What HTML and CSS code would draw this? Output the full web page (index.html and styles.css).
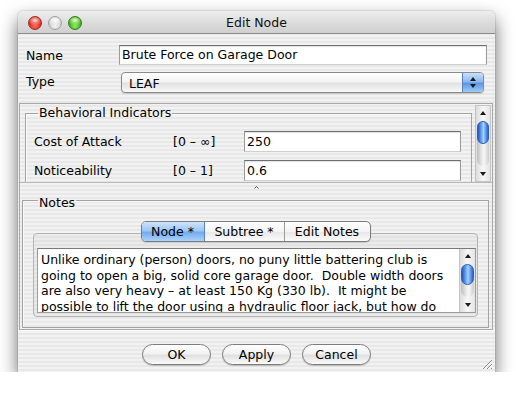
FILE: index.html
```html
<!DOCTYPE html>
<html>
<head>
<meta charset="utf-8">
<link rel="stylesheet" href="styles.css">
</head>
<body>
<div class="window">
  <div class="titlebar">
    <div class="lights">
      <span class="light red"></span><span class="light gray"></span><span class="light green"></span>
    </div>
    <div class="title">Edit Node</div>
    <div></div>
  </div>
  <div class="content">
    <div class="row name-row">
      <span class="lbl">Name</span>
      <div class="field name-field">Brute Force on Garage Door</div>
    </div>
    <div class="row type-row">
      <span class="lbl type-lbl">Type</span>
      <div class="popup">
        <span class="popup-text">LEAF</span>
        <span class="stepper"><i class="tri up"></i><i class="tri down"></i></span>
      </div>
    </div>
    <div class="split">
      <div class="top-pane">
        <div class="viewport">
          <fieldset class="group bi">
            <legend>Behavioral Indicators</legend>
            <div class="bi-row">
              <span class="bi-label">Cost of Attack</span>
              <span class="bi-range">[0 – ∞]</span>
              <div class="field bi-field">250</div>
            </div>
            <div class="bi-row">
              <span class="bi-label">Noticeability</span>
              <span class="bi-range">[0 – 1]</span>
              <div class="field bi-field">0.6</div>
            </div>
          </fieldset>
        </div>
        <div class="vscroll big">
          <div class="arrow"><i class="tri up"></i></div>
          <div class="track"><div class="thumb"></div></div>
          <div class="arrow"><i class="tri down"></i></div>
        </div>
      </div>
      <div class="divider">
        <svg width="5" height="3" viewBox="0 0 5 3"><path d="M0.5 2.5 L2.5 0.5 L4.5 2.5" fill="none" stroke="#555" stroke-width="1"/></svg>
      </div>
      <div class="bottom-pane">
        <fieldset class="group notes">
          <legend>Notes</legend>
          <div class="segmented">
            <span class="seg sel">Node *</span><span class="seg">Subtree *</span><span class="seg last">Edit Notes</span>
          </div>
          <div class="tabbox">
            <div class="textarea">
              <div class="text">Unlike ordinary (person) doors, no puny little battering club is
going to open a big, solid core garage door.  Double width doors
are also very heavy – at least 150 Kg (330 lb).  It might be
possible to lift the door using a hydraulic floor jack, but how do</div>
              <div class="vscroll small">
                <div class="arrow"><i class="tri up"></i></div>
                <div class="track"><div class="thumb"></div></div>
                <div class="arrow"><i class="tri down"></i></div>
              </div>
            </div>
          </div>
        </fieldset>
      </div>
    </div>
    <div class="buttons">
      <span class="btn">OK</span><span class="btn">Apply</span><span class="btn">Cancel</span>
      <svg class="grip" width="11" height="11" viewBox="0 0 11 11">
        <path d="M1 10 L10 1 M5 10 L10 5 M9 10 L10 9" stroke="#8a8a8a" stroke-width="1"/>
        <path d="M2 10 L10 2 M6 10 L10 6" stroke="#fff" stroke-width="1"/>
      </svg>
    </div>
  </div>
</div>
</body>
</html>
```

FILE: styles.css
```css
* { box-sizing: border-box; }
html, body { margin: 0; padding: 0; background: #fff; }
body {
  font-family: "DejaVu Sans", "Liberation Sans", sans-serif;
  font-size: 12.5px;
  color: #000;
}
.window {
  margin: 11px 0 0 18px;
  width: 477px;
  height: 361px;
  border-radius: 5px 5px 0 0;
  box-shadow: 0 8px 18px rgba(0,0,0,0.6), 0 0 1px rgba(0,0,0,0.7);
  display: flex;
  flex-direction: column;
  overflow: hidden;
  background: repeating-linear-gradient(to bottom, #f2f2f2 0 2px, #e8e8e8 2px 4px);
}
.titlebar {
  height: 23px;
  flex: none;
  display: grid;
  grid-template-columns: 1fr auto 1fr;
  align-items: center;
  background: linear-gradient(to bottom, #eeeeee, #dadada 60%, #d0d0d0);
  border-bottom: 1px solid #8e8e8e;
}
.lights { display: flex; gap: 6px; padding-left: 10px; padding-top: 1px; }
.light {
  width: 14px; height: 14px; border-radius: 50%;
  border: 1px solid rgba(0,0,0,0.35);
}
.red { background: radial-gradient(ellipse 60% 45% at 50% 28%, #ffe6e3 0, #f58a82 40%, transparent 100%), radial-gradient(circle at 50% 75%, #ff6a5c 0, #d8271b 55%, #b0130b 100%); border-color: #9e2a23; }
.gray { background: radial-gradient(ellipse 60% 45% at 50% 28%, #ffffff 0, #f0f0f0 40%, transparent 100%), radial-gradient(circle at 50% 75%, #f4f4f4 0, #cfcfcf 55%, #b4b4b4 100%); border-color: #a0a0a0; }
.green { background: radial-gradient(ellipse 60% 45% at 50% 28%, #ecffe0 0, #9be27a 40%, transparent 100%), radial-gradient(circle at 50% 75%, #8ef05a 0, #3faa1a 55%, #2a7f0e 100%); border-color: #2f7d1c; }
.title { font-size: 12.5px; color: #111; padding-top: 1px; }

.content { flex: 1; display: flex; flex-direction: column; }
.row { display: flex; align-items: center; padding: 0 8px; }
.name-row { margin-top: 11px; }
.type-row { margin-top: 7px; }
.lbl { width: 93px; flex: none; }
.type-lbl { padding-bottom: 3px; }
.field {
  background: #fff;
  border: 1px solid #9a9a9a;
  border-top-color: #6e6e6e;
  border-bottom-color: #cfcfcf;
  box-shadow: inset 0 1px 1px rgba(0,0,0,0.12);
  height: 21px;
  line-height: 19px;
  padding-left: 2px;
  white-space: nowrap;
  overflow: hidden;
}
.name-field { width: 368px; height: 20px; line-height: 18px; }
.popup {
  margin-left: 2px;
  width: 363px;
  height: 21px;
  border: 1px solid #8a8a8a;
  border-radius: 4px;
  background: linear-gradient(to bottom, #ffffff, #f3f3f3 45%, #e2e2e2 55%, #f8f8f8);
  display: flex;
  align-items: center;
  overflow: hidden;
  box-shadow: 0 1px 1px rgba(0,0,0,0.15);
}
.popup-text { flex: 1; padding-left: 7px; padding-top: 1px; }
.stepper {
  width: 21px; height: 100%;
  border-left: 1px solid #5a7fbf;
  background: linear-gradient(to bottom, #c9e0fb 0, #8cb9f0 45%, #5f97e4 55%, #9ccaf8 100%);
  display: flex; flex-direction: column; align-items: center; justify-content: center; gap: 3px;
}
.tri { display: block; width: 0; height: 0; border-left: 3px solid transparent; border-right: 3px solid transparent; }
.tri.up { border-bottom: 4px solid #1a1a1a; }
.tri.down { border-top: 4px solid #1a1a1a; }

.split {
  margin: 10px 2px 0 1px;
  height: 227px;
  border: 1px solid #a8a8a8;
  display: flex;
  flex-direction: column;
}
.top-pane {
  height: 79px;
  flex: none;
  display: flex;
  border-bottom: 1px solid #b8b8b8;
  overflow: hidden;
}
.viewport { flex: 1; overflow: hidden; padding: 2px 3px 0 5px; }
.group {
  margin: 0;
  border: 1px solid #a3a3a3;
  box-shadow: inset 1px 1px 0 #fafafa;
}
.group legend {
  padding: 0 1px;
  margin-left: 4px;
  line-height: 14px;
}
.bi { padding: 11px 10px 6px 8px; }
.bi-row { display: flex; align-items: center; height: 21px; margin-bottom: 8px; }
.bi-label { width: 139px; flex: none; }
.bi-range { width: 71px; flex: none; }
.bi-field { flex: 1; }

.vscroll {
  width: 16px;
  flex: none;
  display: flex;
  flex-direction: column;
  background: linear-gradient(to right, #dcdcdc, #f7f7f7 50%, #e4e4e4);
  border-left: 1px solid #c4c4c4;
}
.vscroll.big { margin: 1px 1px 0 0; border: 1px solid #c4c4c4; }
.vscroll .arrow { height: 14px; display: flex; align-items: center; justify-content: center; flex: none; }
.vscroll .track {
  flex: 1;
  margin: 1px 1px;
  border-radius: 7px;
  background: linear-gradient(to right, #bdbdbd, #eeeeee 45%, #f6f6f6 60%, #cdcdcd);
  display: flex; flex-direction: column;
}
.vscroll .thumb {
  height: 23px;
  border-radius: 7px;
  border: 1px solid #2c5fb8;
  background: linear-gradient(to right, #1f55c4 0, #5d9bec 30%, #a7d0fb 55%, #4a8ae6 85%, #2a66cf 100%);
}
.vscroll.small .thumb { height: 21px; }

.divider { height: 10px; flex: none; display: flex; justify-content: center; align-items: flex-start; padding-top: 3px; }
.divider svg { display: block; }
.bottom-pane { flex: 1; padding: 0 3px 0 2px; overflow: hidden; }
.notes { padding: 13px 10px 10px 10px; display: flex; flex-direction: column; }
.notes legend { line-height: 10px; padding-top: 5px; margin-left: 5px; }
.segmented {
  align-self: center;
  display: flex;
  height: 21px;
  border: 1px solid #7c7c7c;
  border-radius: 5px;
  overflow: hidden;
  margin-bottom: -9px;
  position: relative;
  z-index: 1;
  background: linear-gradient(to bottom, #ffffff, #f4f4f4 50%, #e8e8e8 55%, #fbfbfb);
  box-shadow: 0 1px 1px rgba(0,0,0,0.15);
}
.seg { display: flex; align-items: center; justify-content: center; border-right: 1px solid #9a9a9a; }
.seg:nth-child(1) { width: 63px; }
.seg:nth-child(2) { width: 80px; }
.seg:nth-child(3) { width: 85px; border-right: 0; }
.seg.sel { background: linear-gradient(to bottom, #cfe4fb 0, #9dc7f4 45%, #74acef 55%, #a9d3fb 100%); border-right-color: #5b84c2; }
.tabbox {
  border: 1px solid #b3b3b3;
  border-radius: 4px;
  background: repeating-linear-gradient(to bottom, #ebebeb 0 2px, #e2e2e2 2px 4px);
  padding: 14px 1px 3px 3px;
}
.textarea {
  height: 65px;
  display: flex;
  background: #fff;
  border: 1px solid #9c9c9c;
  border-top-color: #7a7a7a;
  overflow: hidden;
}
.text {
  flex: 1;
  white-space: pre;
  line-height: 15.5px;
  padding: 3px 0 0 3px;
  overflow: hidden;
}
.vscroll.small { width: 16px; }

.buttons {
  flex: 1;
  display: flex;
  justify-content: center;
  align-items: flex-start;
  gap: 11px;
  padding-top: 13px;
  position: relative;
  border-top: 1px solid #fbfbfb;
}
.btn {
  width: 69px; height: 21px;
  border: 1px solid #7d7d7d;
  border-radius: 11px;
  display: flex; align-items: center; justify-content: center;
  background: linear-gradient(to bottom, #ffffff, #f2f2f2 45%, #e1e1e1 55%, #fafafa);
  box-shadow: 0 1px 1px rgba(0,0,0,0.2);
}
.grip { position: absolute; right: 2px; bottom: 2px; }
```
